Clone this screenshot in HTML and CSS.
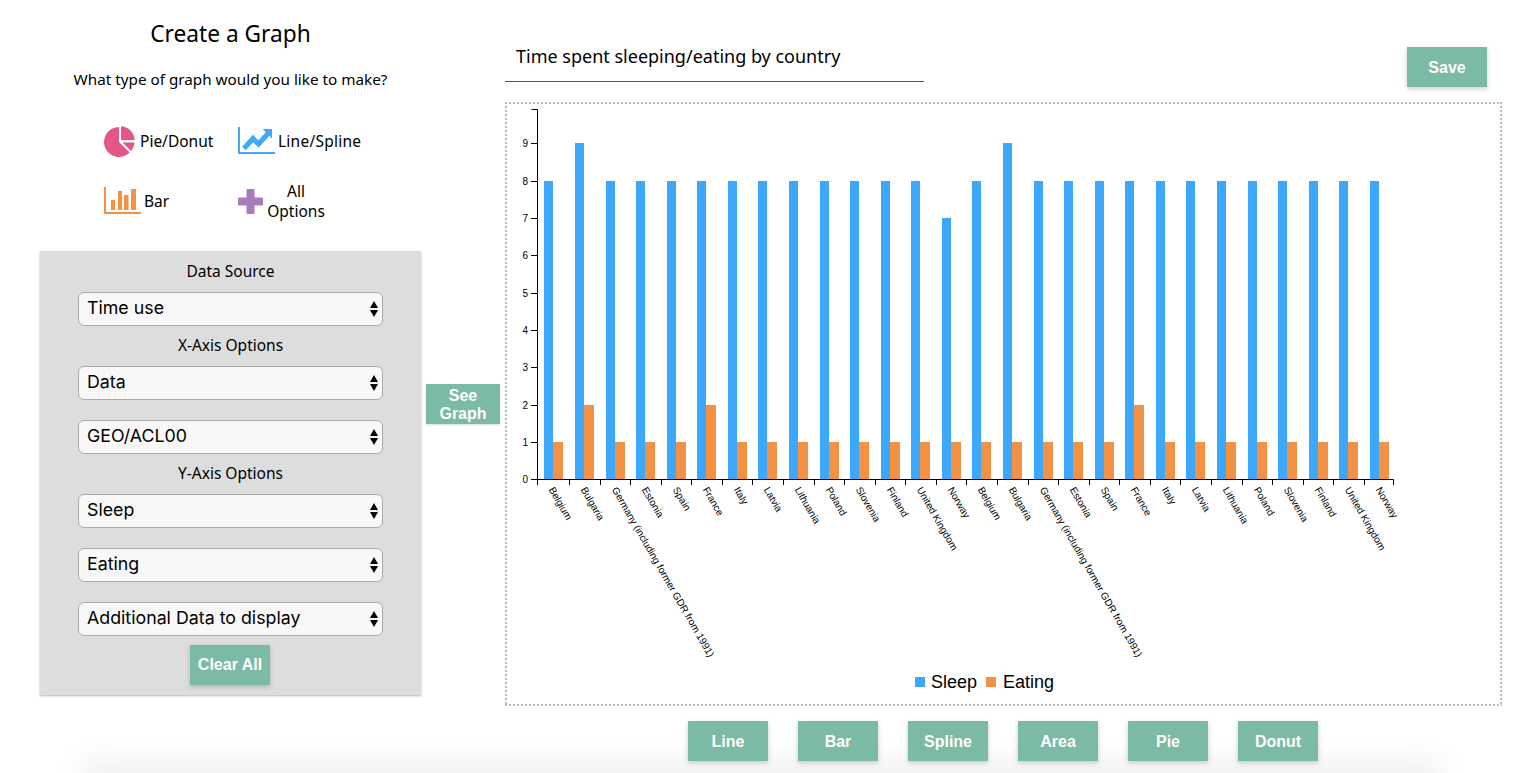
FILE: index.html
```html
<!DOCTYPE html>
<html lang="en">
<head>
  <meta charset="UTF-8" />
  <meta name="viewport" content="width=device-width, initial-scale=1.0" />
  <title>Create a Graph</title>
  <link rel="stylesheet" href="styles.css">
</head>
<body>
  <main class="page">
    <aside class="builder">
      <h1>Create a Graph</h1>
      <p class="intro">What type of graph would you like to make?</p>

      <div class="types">
        <a class="type" href="#">
          <svg class="icon" width="31" height="31" viewBox="0 0 31 31">
            <path class="pie" d="M15 16V1A15 15 0 1 0 25.6 26.6Z" />
            <path class="pie" d="M17 14V.3A14.7 14.7 0 0 1 30.7 14Z" />
            <path class="pie" d="M18.5 16.5H30.7A14.7 14.7 0 0 1 27 25Z" />
          </svg>
          <span>Pie/Donut</span>
        </a>
        <a class="type type-line" href="#">
          <svg class="icon" width="37" height="28" viewBox="0 0 37 28">
            <path class="line-axis" d="M1 0V26H37" />
            <path class="line-trend" d="M6 21.5 15 11.5 20.5 17 30 6.5" />
            <path class="line-head" d="M24.5 2H34V11.5Z" />
          </svg>
          <span>Line/Spline</span>
        </a>
        <a class="type" href="#">
          <svg class="icon" width="37" height="28" viewBox="0 0 37 28">
            <path class="bar-axis" d="M1 0V26H37" />
            <rect class="bar-fill" x="7" y="13" width="4" height="10" />
            <rect class="bar-fill" x="14" y="4" width="4" height="19" />
            <rect class="bar-fill" x="20" y="8" width="4.5" height="15" />
            <rect class="bar-fill" x="27" y="2" width="5" height="21" />
          </svg>
          <span class="type-bar">Bar</span>
        </a>
        <a class="type" href="#">
          <svg class="icon" width="25" height="25" viewBox="0 0 25 25">
            <path class="plus" d="M12.5 2V23M2 12.5H23" />
          </svg>
          <span class="type-all">All Options</span>
        </a>
      </div>

      <form class="panel">
        <label class="field-label" for="source">Data Source</label>
        <div class="select-wrap">
          <select id="source"><option>Time use</option></select>
        </div>

        <label class="field-label" for="x-data">X-Axis Options</label>
        <div class="select-wrap">
          <select id="x-data"><option>Data</option></select>
        </div>
        <div class="select-wrap">
          <select id="x-geo"><option>GEO/ACL00</option></select>
        </div>

        <label class="field-label" for="y-sleep">Y-Axis Options</label>
        <div class="select-wrap">
          <select id="y-sleep"><option>Sleep</option></select>
        </div>
        <div class="select-wrap">
          <select id="y-eating"><option>Eating</option></select>
        </div>
        <div class="select-wrap">
          <select id="y-extra"><option>Additional Data to display</option></select>
        </div>

        <button type="button" class="btn">Clear All</button>
      </form>
    </aside>

    <button type="button" class="btn btn-see">See Graph</button>

    <div class="graph-head">
      <input class="graph-title" type="text" value="Time spent sleeping/eating by country" />
      <button type="button" class="btn">Save</button>
    </div>

    <div class="chart">
      <svg id="chart" width="993" height="600" viewBox="507 104 993 600"></svg>
    </div>

    <div class="chart-types">
      <button type="button" class="btn">Line</button>
      <button type="button" class="btn">Bar</button>
      <button type="button" class="btn">Spline</button>
      <button type="button" class="btn">Area</button>
      <button type="button" class="btn">Pie</button>
      <button type="button" class="btn">Donut</button>
    </div>
  </main>
  <footer class="page-foot"></footer>
  <script src="chart.js"></script>
</body>
</html>
```

FILE: styles.css
```css
html, body {
  margin: 0;
  height: 773px;
  overflow: hidden;
}
body {
  background-color: #fff;
  color: #000;
  font-family: 'Noto Sans', sans-serif;
}
.page {
  display: grid;
  grid-template-columns: 426px 79px 997px;
  grid-template-rows: 102px 604px 67px;
  height: 773px;
}
.builder {
  grid-row: 1 / 4;
  margin-left: 40px;
  width: 381px;
}
h1 {
  margin: 0;
  padding-top: 18px;
  font-size: 22.7px;
  font-weight: 400;
  line-height: 32px;
  text-align: center;
}
.intro {
  margin: 19px 0 0;
  font-size: 15.25px;
  line-height: 20px;
  text-align: center;
}
.types {
  display: grid;
  grid-template-columns: 134px 150px;
  grid-auto-rows: 40px;
  row-gap: 20px;
  margin: 32px 0 30px 64px;
}
.type {
  display: flex;
  align-items: center;
  color: #000;
  font-size: 15.5px;
  line-height: 20px;
  text-decoration: none;
}
.icon {
  flex: none;
}
.type .icon {
  margin-right: 5px;
}
.type-line .icon {
  margin-right: 3px;
}
.type-line span {
  letter-spacing: 0.25px;
}
.type-bar {
  margin-left: -2px;
}
.type-all {
  width: 66px;
  margin-left: -5px;
  text-align: center;
}
.pie {
  fill: #e55688;
}
.line-axis {
  fill: none;
  stroke: #3fa9f5;
  stroke-width: 2;
}
.line-trend {
  fill: none;
  stroke: #3fa9f5;
  stroke-width: 5;
}
.line-head {
  fill: #3fa9f5;
}
.bar-axis {
  fill: none;
  stroke: #f39144;
  stroke-width: 2;
}
.bar-fill {
  fill: #f39144;
}
.plus {
  fill: none;
  stroke: #a87bbd;
  stroke-width: 8;
  stroke-linecap: round;
}
.panel {
  display: flex;
  flex-direction: column;
  align-items: center;
  height: 444px;
  box-sizing: border-box;
  padding-top: 11px;
  background-color: #ddd;
  box-shadow: 0 1px 2px rgba(0, 0, 0, 0.3);
}
.field-label {
  margin-bottom: 10px;
  font-size: 15.5px;
  line-height: 18px;
  height: 20px;
}
.select-wrap {
  position: relative;
  width: 305px;
  margin-bottom: 10px;
}
.select-wrap + .select-wrap {
  margin-top: 10px;
}
.select-wrap::before,
.select-wrap::after {
  content: "";
  position: absolute;
  right: 5px;
  border-left: 4px solid transparent;
  border-right: 4px solid transparent;
  pointer-events: none;
}
.select-wrap::before {
  top: 9px;
  border-bottom: 7px solid #000;
}
.select-wrap::after {
  top: 18px;
  border-top: 7px solid #000;
}
select {
  display: block;
  width: 100%;
  height: 34px;
  padding: 0 24px 4px 8px;
  appearance: none;
  background-color: #f8f8f8;
  border: 1px solid #aaa;
  border-radius: 6px;
  color: #000;
  font-family: 'Inter', sans-serif;
  font-size: 17.8px;
}
.btn {
  width: 80px;
  height: 40px;
  padding: 1px 0 0;
  background-color: #7bbaa4;
  border: none;
  box-shadow: 0 2px 5px rgba(0, 0, 0, 0.2);
  color: #fff;
  font-family: 'Liberation Sans', sans-serif;
  font-size: 16px;
  font-weight: 700;
  cursor: pointer;
}
.panel .btn {
  margin: -1px 1px 0 0;
  padding: 0;
}
.btn-see {
  grid-column: 2;
  grid-row: 2;
  align-self: center;
  width: 74px;
  line-height: 18px;
  box-shadow: 0 1px 2px rgba(0, 0, 0, 0.15);
}
.graph-head {
  grid-column: 3;
  grid-row: 1;
  display: flex;
  justify-content: space-between;
  align-items: flex-start;
  padding: 47px 15px 0 0;
}
.graph-title {
  width: 408px;
  height: 45px;
  margin-top: -14px;
  padding: 0 0 3px 11px;
  border: none;
  border-bottom: 1px solid #555;
  color: #000;
  font-family: 'Noto Sans', sans-serif;
  font-size: 18px;
  outline: none;
}
/* square dots, the border-style dotted ones come out round and faint */
.chart {
  grid-column: 3;
  grid-row: 2;
  padding: 2px;
  background:
    linear-gradient(90deg, #bbb 50%, transparent 50%) 0 0 / 4px 2px repeat-x,
    linear-gradient(90deg, #bbb 50%, transparent 50%) 0 100% / 4px 2px repeat-x,
    linear-gradient(#bbb 50%, transparent 50%) 0 0 / 2px 4px repeat-y,
    linear-gradient(#bbb 50%, transparent 50%) 100% 0 / 2px 4px repeat-y;
}
.chart svg {
  display: block;
}
.axis-line {
  fill: none;
  stroke: #000;
  stroke-width: 1;
}
.bar-sleep {
  fill: #3ca8fb;
}
.bar-eating {
  fill: #f39144;
}
.tick-label {
  font-family: 'Liberation Sans', sans-serif;
  font-size: 10px;
  fill: #000;
}
.legend-label {
  font-family: 'Liberation Sans', sans-serif;
  font-size: 18px;
  fill: #000;
}
.chart-types {
  grid-column: 3;
  grid-row: 3;
  display: flex;
  align-items: flex-start;
  gap: 30px;
  padding: 15px 0 0 183px;
}
.page-foot {
  height: 0;
  margin: 0 90px;
  box-shadow: 0 0 28px 8px rgba(0, 0, 0, 0.1);
}
```

FILE: chart.js
```js
const countries = ['Belgium', 'Bulgaria', 'Germany (including former GDR from 1991)', 'Estonia', 'Spain', 'France', 'Italy', 'Latvia', 'Lithuania', 'Poland', 'Slovenia', 'Finland', 'United Kingdom', 'Norway'];
const sleep = [8, 9, 8, 8, 8, 8, 8, 8, 8, 8, 8, 8, 8, 7, 8, 9, 8, 8, 8, 8, 8, 8, 8, 8, 8, 8, 8, 8];
const eating = [1, 2, 1, 1, 1, 2, 1, 1, 1, 1, 1, 1, 1, 1, 1, 1, 1, 1, 1, 2, 1, 1, 1, 1, 1, 1, 1, 1];

const svg = document.getElementById('chart');
const NS = 'http://www.w3.org/2000/svg';
const baseY = 479;
const step = 30.57;

function add(tag, attrs, text) {
  const el = document.createElementNS(NS, tag);
  for (const key in attrs) el.setAttribute(key, attrs[key]);
  if (text) el.textContent = text;
  svg.appendChild(el);
  return el;
}

function yFor(v) {
  return Math.round(baseY + 0.3 - v * 37.33);
}

// bars and x axis
for (let i = 0; i < 28; i++) {
  const x = Math.round(544.49 + step * i);
  const tick = i === 0 ? 537 : x - 6;
  add('rect', { class: 'bar-sleep', x: x, y: yFor(sleep[i]), width: 9, height: baseY - yFor(sleep[i]) });
  add('rect', { class: 'bar-eating', x: x + 9, y: yFor(eating[i]), width: 10, height: baseY - yFor(eating[i]) });
  add('path', { class: 'axis-line', d: `M${tick + 0.5} ${baseY}v6` });
  const lx = tick + 11.5;
  add('text', { class: 'tick-label', x: lx, y: 489.5, transform: `rotate(60 ${lx} 489.5)` }, countries[i % 14]);
}
add('path', { class: 'axis-line', d: `M1393.5 ${baseY + 6}V${baseY}.5H537.5V109.5H531.5` });

// y axis
for (let v = 0; v < 10; v++) {
  const y = yFor(v);
  add('path', { class: 'axis-line', d: `M531 ${y + 0.5}h6` });
  add('text', { class: 'tick-label', x: 528, y: y + 4, 'text-anchor': 'end' }, String(v));
}

// legend
add('rect', { class: 'bar-sleep', x: 915, y: 677, width: 10, height: 10 });
add('text', { class: 'legend-label', x: 931, y: 688 }, 'Sleep');
add('rect', { class: 'bar-eating', x: 986, y: 677, width: 10, height: 10 });
add('text', { class: 'legend-label', x: 1003, y: 688 }, 'Eating');
```
